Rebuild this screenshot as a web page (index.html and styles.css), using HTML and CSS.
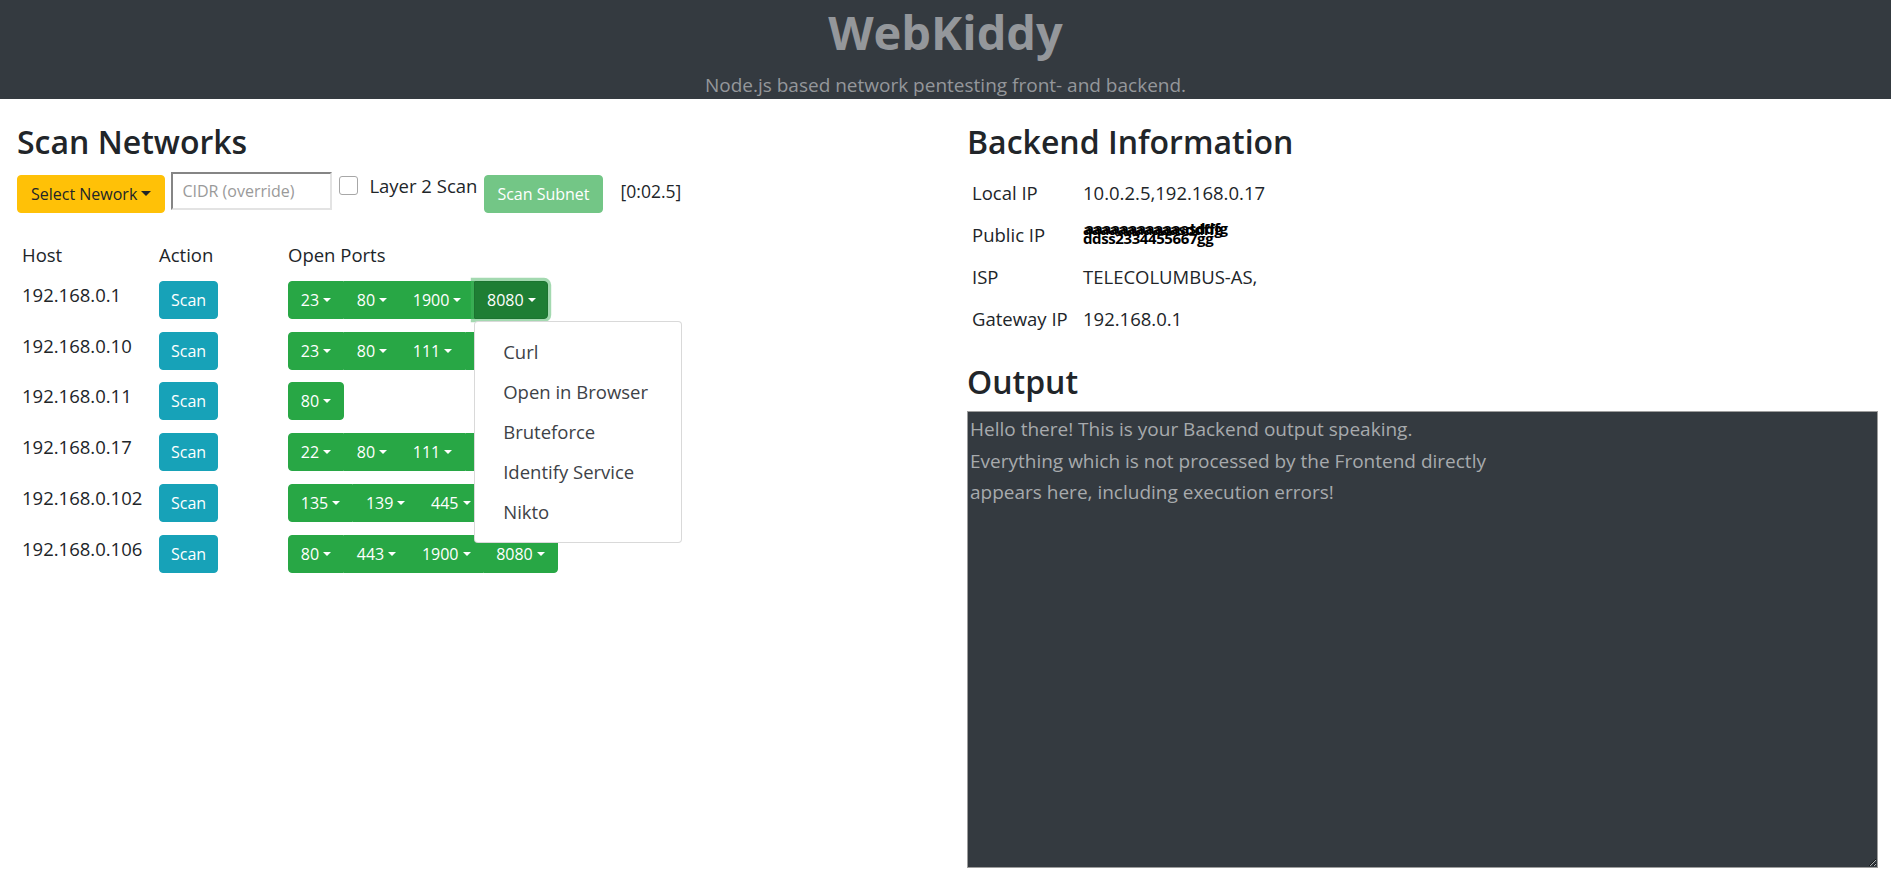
FILE: index.html
```html
<!DOCTYPE html>
<html lang="en">
<head>
<meta charset="utf-8">
<title>WebKiddy</title>
<link rel="stylesheet" href="styles.css">
</head>
<body>
<header class="hero">
  <h1 class="hero-title">WebKiddy</h1>
  <p class="hero-lead">Node.js based network pentesting front- and backend.</p>
</header>
<main class="layout">
  <section class="col">
    <h2 class="heading">Scan Networks</h2>
    <div class="controls">
      <button class="btn btn-warning">Select Nework<span class="caret"></span></button>
      <input class="cidr" type="text" placeholder="CIDR (override)">
      <input class="check" type="checkbox">
      <label class="check-label">Layer 2 Scan</label>
      <button class="btn btn-subnet">Scan Subnet</button>
      <span class="timer">[0:02.5]</span>
    </div>
    <table class="hosts">
      <colgroup><col class="c-host"><col class="c-action"><col></colgroup>
      <thead>
        <tr><th>Host</th><th>Action</th><th>Open Ports</th></tr>
      </thead>
      <tbody>
        <tr>
          <td>192.168.0.1</td>
          <td><div class="cell"><button class="btn btn-info">Scan</button></div></td>
          <td><div class="cell ports">
            <button class="btn port first">23<span class="caret"></span></button>
            <button class="btn port">80<span class="caret"></span></button>
            <button class="btn port">1900<span class="caret"></span></button>
            <div class="port-wrap">
              <button class="btn port last active">8080<span class="caret"></span></button>
              <div class="menu">
                <span class="menu-item">Curl</span>
                <span class="menu-item">Open in Browser</span>
                <span class="menu-item">Bruteforce</span>
                <span class="menu-item">Identify Service</span>
                <span class="menu-item">Nikto</span>
              </div>
            </div>
          </div></td>
        </tr>
        <tr>
          <td>192.168.0.10</td>
          <td><div class="cell"><button class="btn btn-info">Scan</button></div></td>
          <td><div class="cell ports">
            <button class="btn port first">23<span class="caret"></span></button>
            <button class="btn port">80<span class="caret"></span></button>
            <button class="btn port">111<span class="caret"></span></button>
            <button class="btn port last">2049<span class="caret"></span></button>
          </div></td>
        </tr>
        <tr>
          <td>192.168.0.11</td>
          <td><div class="cell"><button class="btn btn-info">Scan</button></div></td>
          <td><div class="cell ports">
            <button class="btn port first last">80<span class="caret"></span></button>
          </div></td>
        </tr>
        <tr>
          <td>192.168.0.17</td>
          <td><div class="cell"><button class="btn btn-info">Scan</button></div></td>
          <td><div class="cell ports">
            <button class="btn port first">22<span class="caret"></span></button>
            <button class="btn port">80<span class="caret"></span></button>
            <button class="btn port">111<span class="caret"></span></button>
            <button class="btn port last">139<span class="caret"></span></button>
          </div></td>
        </tr>
        <tr>
          <td>192.168.0.102</td>
          <td><div class="cell"><button class="btn btn-info">Scan</button></div></td>
          <td><div class="cell ports">
            <button class="btn port first">135<span class="caret"></span></button>
            <button class="btn port">139<span class="caret"></span></button>
            <button class="btn port">445<span class="caret"></span></button>
            <button class="btn port last">3389<span class="caret"></span></button>
          </div></td>
        </tr>
        <tr>
          <td>192.168.0.106</td>
          <td><div class="cell"><button class="btn btn-info">Scan</button></div></td>
          <td><div class="cell ports">
            <button class="btn port first">80<span class="caret"></span></button>
            <button class="btn port">443<span class="caret"></span></button>
            <button class="btn port">1900<span class="caret"></span></button>
            <button class="btn port last">8080<span class="caret"></span></button>
          </div></td>
        </tr>
      </tbody>
    </table>
  </section>
  <section class="col">
    <h2 class="heading">Backend Information</h2>
    <div class="info">
      <div>Local IP</div><div>10.0.2.5,192.168.0.17</div>
      <div>Public IP</div><div><div class="glitch"><span class="glitch-line">aaaaaaaaaaasddffg</span><span class="glitch-over">aaaaaaaaaaaasddfg</span><span class="glitch-line">ddss2334455667gg</span></div></div>
      <div>ISP</div><div>TELECOLUMBUS-AS,</div>
      <div>Gateway IP</div><div>192.168.0.1</div>
    </div>
    <h2 class="heading output-heading">Output</h2>
    <textarea class="output">Hello there! This is your Backend output speaking.
Everything which is not processed by the Frontend directly
appears here, including execution errors!</textarea>
  </section>
</main>
</body>
</html>
```

FILE: styles.css
```css
body {
  margin: 0;
  font-family: "Open Sans", "Noto Sans", sans-serif;
  font-size: 18.5px;
  line-height: 1.5;
  color: #212529;
  background: #fff;
}

.hero {
  background: #343a40;
  height: 99px;
  box-sizing: border-box;
  text-align: center;
  color: #94979b;
}

.hero-title {
  margin: 0;
  font-size: 47px;
  font-weight: 700;
  line-height: 64px;
}

.hero-lead {
  margin: 8.6px 0 0;
  font-size: 19px;
  line-height: 24px;
}

.layout {
  display: grid;
  grid-template-columns: 1fr 911px;
  column-gap: 39px;
  padding: 24.4px 13px 0 17px;
}

.col {
  min-width: 0;
}

.heading {
  margin: 0 0 10px;
  font-size: 32px;
  font-weight: 600;
  line-height: 38.4px;
}

.btn {
  display: inline-block;
  box-sizing: border-box;
  font-family: inherit;
  font-size: 16px;
  line-height: 24px;
  padding: 6px 12px;
  border: 1px solid transparent;
  border-radius: 4px;
  color: #fff;
  white-space: nowrap;
  cursor: pointer;
}

.caret {
  display: inline-block;
  width: 0;
  height: 0;
  margin-left: 0.255em;
  vertical-align: 0.255em;
  border-top: 0.3em solid;
  border-right: 0.3em solid transparent;
  border-left: 0.3em solid transparent;
}

.controls {
  display: flex;
  align-items: flex-start;
  height: 41px;
}

.btn-warning {
  margin-top: 3px;
  padding: 6px 13px;
  background: #ffc107;
  border-color: #ffc107;
  color: #212529;
}

.btn-warning .caret {
  border-top-width: 0.33em;
  border-right-width: 0.33em;
  border-left-width: 0.33em;
}

.cidr {
  margin: 0 0 0 6px;
  width: 161px;
  height: 38px;
  box-sizing: border-box;
  border-style: solid;
  border-width: 2px;
  border-color: #858585 #e3e3e3 #e3e3e3 #858585;
  padding: 0 9px;
  font-family: inherit;
  font-size: 16px;
  background: #fff;
}

.cidr::placeholder {
  color: #9a9a9a;
}

.check {
  appearance: none;
  -webkit-appearance: none;
  margin: 4px 0 0 7px;
  width: 19px;
  height: 19px;
  box-sizing: border-box;
  border: 1px solid #a7a7a7;
  border-radius: 3px;
  background: #fff;
}

.check-label {
  margin-left: 11px;
  line-height: 27.75px;
}

.btn-subnet {
  margin: 3px 0 0 7px;
  background: #73c686;
  border-color: #73c686;
}

.timer {
  margin: 6px 0 0 18px;
  font-size: 17.5px;
  line-height: 26px;
}

.hosts {
  width: 100%;
  margin-top: 19.6px;
  border-collapse: collapse;
  border-spacing: 0;
  table-layout: fixed;
}

.c-host {
  width: 137px;
}

.c-action {
  width: 129px;
}

.hosts th,
.hosts td {
  padding: 6.4px 5px;
  text-align: left;
  vertical-align: top;
  font-weight: 400;
  line-height: 27.75px;
}

.hosts th {
  padding-top: 8.4px;
  padding-bottom: 6px;
}

.cell {
  display: flex;
}

.btn-info {
  padding: 6px 11px;
  background: #17a2b8;
  border-color: #17a2b8;
}

.port {
  padding: 6px 11.8px;
  border-radius: 0;
  background: #28a745;
  border-color: #28a745;
}

.port.first {
  border-top-left-radius: 4px;
  border-bottom-left-radius: 4px;
}

.port.last {
  border-top-right-radius: 4px;
  border-bottom-right-radius: 4px;
}

.port.active {
  position: relative;
  z-index: 1;
  background: #1e7e34;
  border-color: #1c7430;
  box-shadow: 0 0 0 3.2px rgba(72, 180, 97, 0.5);
}

.port-wrap {
  position: relative;
  display: flex;
}

.menu {
  position: absolute;
  top: calc(100% + 2px);
  left: 0;
  z-index: 3;
  min-width: 208px;
  box-sizing: border-box;
  padding: 10.4px 0;
  background: #fff;
  border: 1px solid rgba(0, 0, 0, 0.15);
  border-radius: 4px;
}

.menu-item {
  display: block;
  padding: 6.1px 28px;
  font-size: 18.5px;
  line-height: 27.75px;
  color: #3d4247;
  white-space: nowrap;
}

.info {
  display: grid;
  grid-template-columns: 111px 1fr;
}

.info > div {
  padding: 7px 5px;
  line-height: 28px;
}

.glitch {
  position: relative;
  padding-top: 4px;
  font-size: 15px;
  font-weight: 700;
  line-height: 9px;
  letter-spacing: -0.4px;
  color: #000;
}

.glitch-line {
  display: block;
}

.glitch-over {
  position: absolute;
  left: 2px;
  top: 3px;
  white-space: nowrap;
}

.output-heading {
  margin-top: 23px;
}

.output {
  display: block;
  width: 911px;
  height: 457px;
  box-sizing: border-box;
  margin: 0;
  padding: 2px;
  background: #343a40;
  color: #a7aaad;
  border: 1px solid #9d9d9d;
  font-family: inherit;
  font-size: 19px;
  line-height: 31.4px;
  resize: both;
}
```
